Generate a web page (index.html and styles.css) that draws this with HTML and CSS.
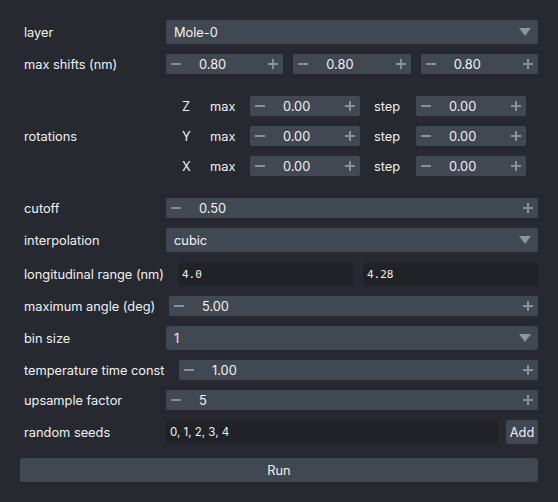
FILE: index.html
```html
<!DOCTYPE html>
<html>
<head>
<meta charset="utf-8">
<link rel="stylesheet" href="styles.css">
</head>
<body>
<div class="panel">
  <div class="row h24">
    <div class="lbl">layer</div>
    <div class="combo"><span class="ctext">Mole-0</span><svg class="caret" width="12" height="8" viewBox="0 0 12 8"><path d="M0 0H12L6 8Z"/></svg></div>
  </div>
  <div class="row h20">
    <div class="lbl">max shifts (nm)</div>
    <div class="triple">
      <div class="spin"><svg class="ic" width="10" height="10" viewBox="0 0 10 10"><rect x="0" y="4" width="10" height="2"/></svg><span class="val">0.80</span><svg class="ic plus" width="10" height="10" viewBox="0 0 10 10"><rect x="0" y="4" width="10" height="2"/><rect x="4" y="0" width="2" height="10"/></svg></div>
      <div class="spin"><svg class="ic" width="10" height="10" viewBox="0 0 10 10"><rect x="0" y="4" width="10" height="2"/></svg><span class="val">0.80</span><svg class="ic plus" width="10" height="10" viewBox="0 0 10 10"><rect x="0" y="4" width="10" height="2"/><rect x="4" y="0" width="2" height="10"/></svg></div>
      <div class="spin"><svg class="ic" width="10" height="10" viewBox="0 0 10 10"><rect x="0" y="4" width="10" height="2"/></svg><span class="val">0.80</span><svg class="ic plus" width="10" height="10" viewBox="0 0 10 10"><rect x="0" y="4" width="10" height="2"/><rect x="4" y="0" width="2" height="10"/></svg></div>
    </div>
  </div>
  <div class="row rot">
    <div class="lbl">rotations</div>
    <div class="rotgrid">
      <div class="rrow">
        <span class="axis">Z</span><span class="mx">max</span>
        <div class="spin w110"><svg class="ic" width="10" height="10" viewBox="0 0 10 10"><rect x="0" y="4" width="10" height="2"/></svg><span class="val">0.00</span><svg class="ic plus" width="10" height="10" viewBox="0 0 10 10"><rect x="0" y="4" width="10" height="2"/><rect x="4" y="0" width="2" height="10"/></svg></div>
        <span class="st">step</span>
        <div class="spin w110"><svg class="ic" width="10" height="10" viewBox="0 0 10 10"><rect x="0" y="4" width="10" height="2"/></svg><span class="val">0.00</span><svg class="ic plus" width="10" height="10" viewBox="0 0 10 10"><rect x="0" y="4" width="10" height="2"/><rect x="4" y="0" width="2" height="10"/></svg></div>
      </div>
      <div class="rrow">
        <span class="axis">Y</span><span class="mx">max</span>
        <div class="spin w110"><svg class="ic" width="10" height="10" viewBox="0 0 10 10"><rect x="0" y="4" width="10" height="2"/></svg><span class="val">0.00</span><svg class="ic plus" width="10" height="10" viewBox="0 0 10 10"><rect x="0" y="4" width="10" height="2"/><rect x="4" y="0" width="2" height="10"/></svg></div>
        <span class="st">step</span>
        <div class="spin w110"><svg class="ic" width="10" height="10" viewBox="0 0 10 10"><rect x="0" y="4" width="10" height="2"/></svg><span class="val">0.00</span><svg class="ic plus" width="10" height="10" viewBox="0 0 10 10"><rect x="0" y="4" width="10" height="2"/><rect x="4" y="0" width="2" height="10"/></svg></div>
      </div>
      <div class="rrow">
        <span class="axis">X</span><span class="mx">max</span>
        <div class="spin w110"><svg class="ic" width="10" height="10" viewBox="0 0 10 10"><rect x="0" y="4" width="10" height="2"/></svg><span class="val">0.00</span><svg class="ic plus" width="10" height="10" viewBox="0 0 10 10"><rect x="0" y="4" width="10" height="2"/><rect x="4" y="0" width="2" height="10"/></svg></div>
        <span class="st">step</span>
        <div class="spin w110"><svg class="ic" width="10" height="10" viewBox="0 0 10 10"><rect x="0" y="4" width="10" height="2"/></svg><span class="val">0.00</span><svg class="ic plus" width="10" height="10" viewBox="0 0 10 10"><rect x="0" y="4" width="10" height="2"/><rect x="4" y="0" width="2" height="10"/></svg></div>
      </div>
    </div>
  </div>
  <div class="row h20">
    <div class="lbl">cutoff</div>
    <div class="spin grow"><svg class="ic" width="10" height="10" viewBox="0 0 10 10"><rect x="0" y="4" width="10" height="2"/></svg><span class="val">0.50</span><svg class="ic plus" width="10" height="10" viewBox="0 0 10 10"><rect x="0" y="4" width="10" height="2"/><rect x="4" y="0" width="2" height="10"/></svg></div>
  </div>
  <div class="row h24">
    <div class="lbl">interpolation</div>
    <div class="combo"><span class="ctext">cubic</span><svg class="caret" width="12" height="8" viewBox="0 0 12 8"><path d="M0 0H12L6 8Z"/></svg></div>
  </div>
  <div class="row h24">
    <div class="lbl">longitudinal range (nm)</div>
    <div class="pair">
      <div class="edit mono">4.0</div>
      <div class="edit mono">4.28</div>
    </div>
  </div>
  <div class="row h20">
    <div class="lbl">maximum angle (deg)</div>
    <div class="spin grow off3"><svg class="ic" width="10" height="10" viewBox="0 0 10 10"><rect x="0" y="4" width="10" height="2"/></svg><span class="val">5.00</span><svg class="ic plus" width="10" height="10" viewBox="0 0 10 10"><rect x="0" y="4" width="10" height="2"/><rect x="4" y="0" width="2" height="10"/></svg></div>
  </div>
  <div class="row h24">
    <div class="lbl">bin size</div>
    <div class="combo"><span class="ctext">1</span><svg class="caret" width="12" height="8" viewBox="0 0 12 8"><path d="M0 0H12L6 8Z"/></svg></div>
  </div>
  <div class="row h20">
    <div class="lbl">temperature time const</div>
    <div class="spin grow off13"><svg class="ic" width="10" height="10" viewBox="0 0 10 10"><rect x="0" y="4" width="10" height="2"/></svg><span class="val">1.00</span><svg class="ic plus" width="10" height="10" viewBox="0 0 10 10"><rect x="0" y="4" width="10" height="2"/><rect x="4" y="0" width="2" height="10"/></svg></div>
  </div>
  <div class="row h20">
    <div class="lbl">upsample factor</div>
    <div class="spin grow"><svg class="ic" width="10" height="10" viewBox="0 0 10 10"><rect x="0" y="4" width="10" height="2"/></svg><span class="val">5</span><svg class="ic plus" width="10" height="10" viewBox="0 0 10 10"><rect x="0" y="4" width="10" height="2"/><rect x="4" y="0" width="2" height="10"/></svg></div>
  </div>
  <div class="row h24">
    <div class="lbl">random seeds</div>
    <div class="seeds">
      <div class="edit small">0, 1, 2, 3, 4</div>
      <div class="btn add">Add</div>
    </div>
  </div>
  <div class="btn run">Run</div>
</div>
</body>
</html>
```

FILE: styles.css
```css
html, body {
  margin: 0;
  padding: 0;
  background: #262930;
}
body {
  width: 558px;
  height: 502px;
  overflow: hidden;
  font-family: Inter, "Noto Sans", "Liberation Sans", sans-serif;
  font-size: 12.8px;
  color: #f0f1f2;
}
.panel {
  display: flex;
  flex-direction: column;
  padding: 20px 20px 0 20px;
}
.row {
  display: flex;
  align-items: center;
  padding-left: 4px;
  margin-bottom: 10px;
}
.h24 { height: 24px; }
.h20 { height: 20px; }
.lbl {
  width: 142px;
  flex: none;
  white-space: nowrap;
}
.combo {
  flex: 1;
  height: 24px;
  background: #414851;
  border-radius: 3px;
  display: flex;
  align-items: center;
  box-sizing: border-box;
  padding: 0 7px 0 8px;
}
.ctext { flex: 1; }
.caret { fill: #8f959e; display: block; }
.triple {
  flex: 1;
  display: flex;
  gap: 10px;
}
.triple .spin { flex: 1; }
.spin {
  height: 20px;
  background: #414851;
  border-radius: 2px;
  display: flex;
  align-items: center;
  box-sizing: border-box;
  padding: 0 5px;
}
.spin.grow { flex: 1; }
.spin.off3 { margin-left: 3px; }
.spin.off13 { margin-left: 13px; }
.spin.w110 { width: 110px; flex: none; }
.ic { fill: #8a9099; display: block; flex: none; }
.val { flex: 1; margin-left: 18px; }
.rot {
  padding-top: 12px;
  padding-bottom: 12px;
}
.rotgrid {
  display: flex;
  flex-direction: column;
  gap: 10px;
}
.rrow {
  display: flex;
  align-items: center;
  height: 20px;
}
.axis { width: 28px; margin-left: 16px; }
.mx { width: 40px; }
.st { width: 42px; margin-left: 14px; }
.pair {
  flex: 1;
  display: flex;
  gap: 10px;
  margin-left: 12px;
}
.edit {
  flex: 1;
  height: 24px;
  background: #202227;
  border-radius: 2px;
  box-sizing: border-box;
  padding-left: 4px;
  display: flex;
  align-items: center;
}
.mono {
  font-family: "DejaVu Sans Mono", "Liberation Mono", monospace;
  font-size: 11px;
}
.small { font-size: 11.5px; }
.pair .edit { height: 23px; }
.seeds {
  flex: 1;
  display: flex;
  gap: 8px;
}
.btn {
  background: #414851;
  border-radius: 3px;
  display: flex;
  align-items: center;
  justify-content: center;
  height: 24px;
}
.add { width: 32px; flex: none; }
.run { margin-top: 4px; }
```
